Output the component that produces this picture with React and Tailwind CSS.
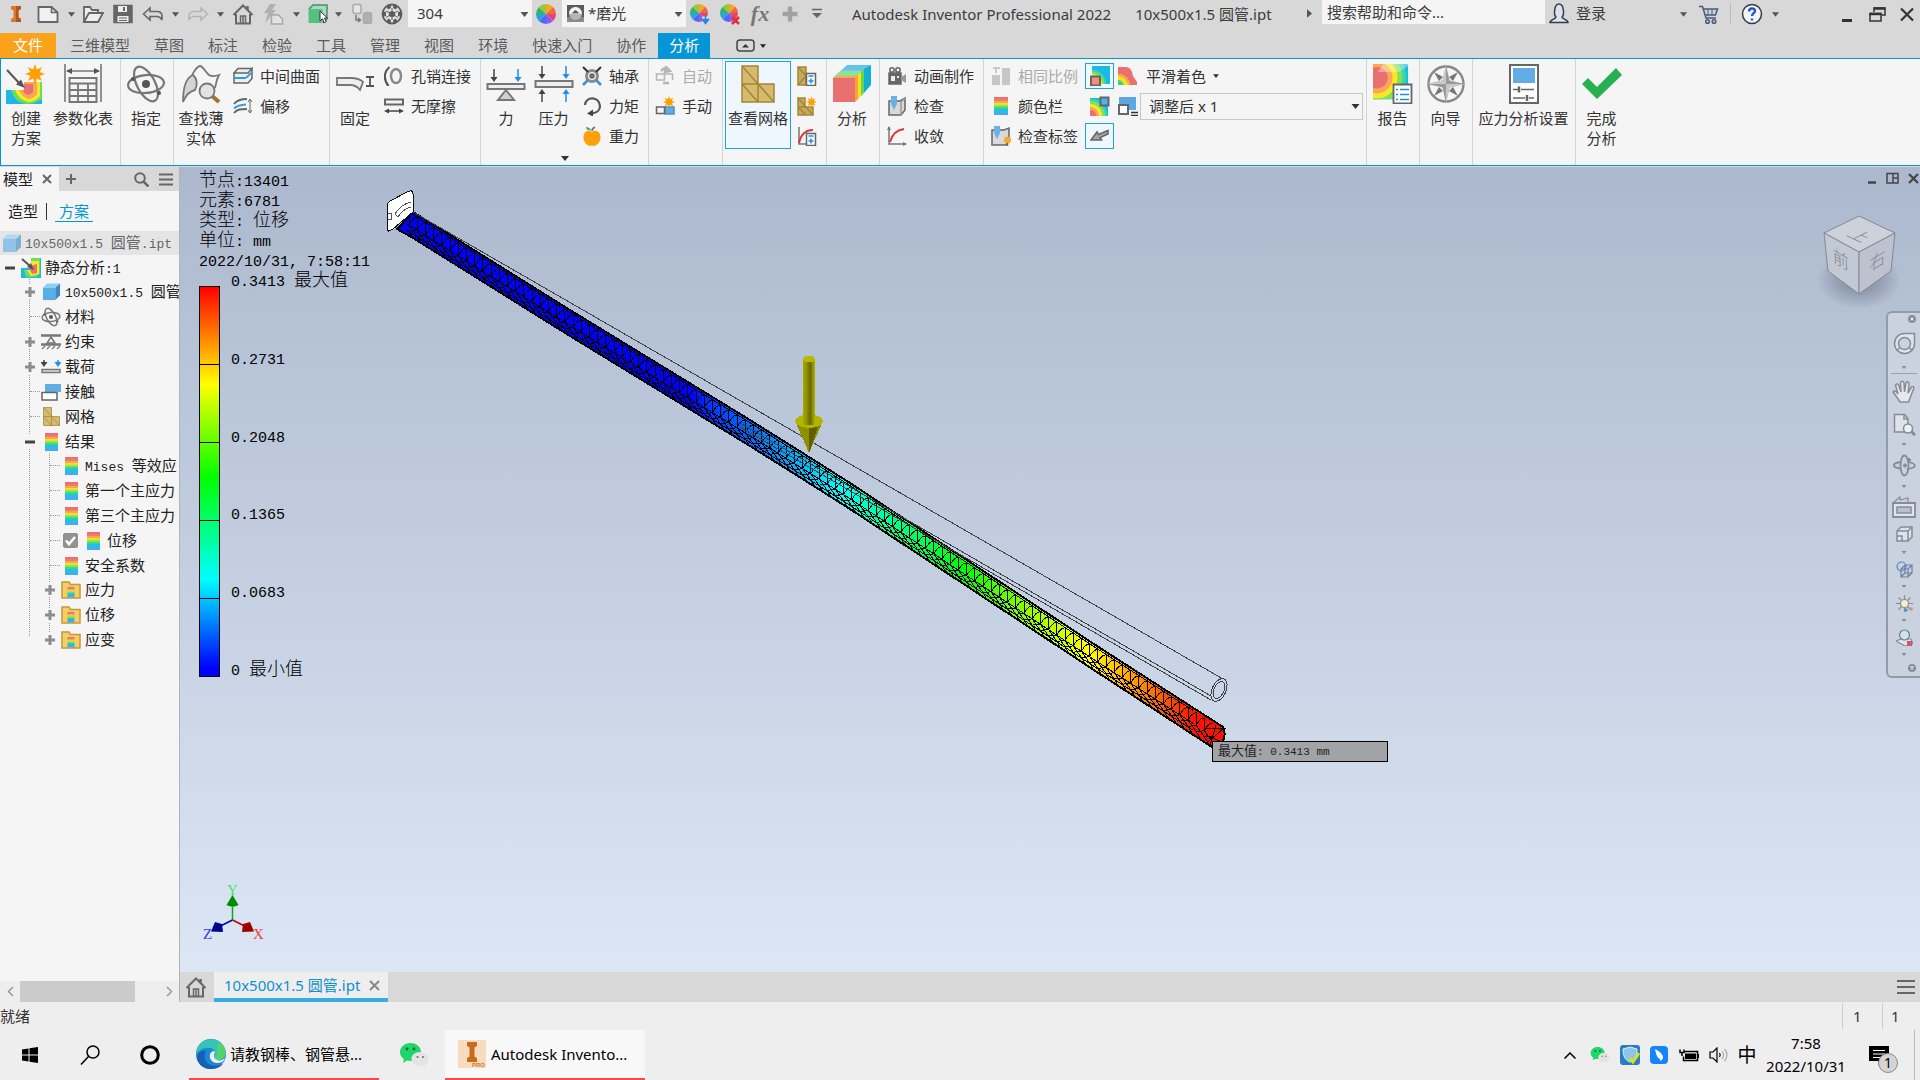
import React from "react";

const UI = "font-['Noto_Sans','Noto_Sans_CJK_SC',sans-serif]";

/* ---------- helpers ---------- */

function Svg({ w = 22, h = w, vw = w, vh = h, children, ...rest }) {
  return (
    <svg
      width={w}
      height={h}
      viewBox={`0 0 ${vw} ${vh}`}
      fill="none"
      stroke="#666"
      strokeWidth="1.5"
      className="shrink-0"
      aria-hidden="true"
      {...rest}
    >
      {children}
    </svg>
  );
}

/* Latin runs are set in a narrower monospaced face than the Chinese runs. */
function Mixed({ text, latin = "text-[13px]" }) {
  return text.split(/([\x20-\x7e]+)/).map((part, i) =>
    /^[\x20-\x7e]+$/.test(part) ? (
      <span key={i} className={`font-['Liberation_Mono',monospace] whitespace-pre ${latin}`}>
        {part}
      </span>
    ) : (
      part
    )
  );
}

const Caret = ({ color = "#555", w = 8, h = 5 }) => (
  <svg width={w} height={h} viewBox="0 0 8 5" aria-hidden="true" className="shrink-0">
    <path d="M0 0h8L4 5z" fill={color} />
  </svg>
);

const CaretBtn = ({ className = "", label = "更多" }) => (
  <button type="button" aria-label={label} className={`flex h-7 w-3 items-center justify-center ${className}`}>
    <Caret w={7} />
  </button>
);

const QBtn = ({ className = "", label, children }) => (
  <button type="button" aria-label={label} className={`flex h-7 w-[22px] shrink-0 items-center justify-center ${className}`}>
    {children}
  </button>
);

/* ---------- shared glyphs ---------- */

const STRIPES = ["#ea6f6f", "#ee7b6c", "#f8a45a", "#f7e21a", "#8be35a", "#35d98a", "#1fc3dc", "#35b4f5", "#46aaf2"];

const Bar = ({ x = 0, y = 0, w = 12, h = 18 }) => (
  <g stroke="none">
    {STRIPES.map((c, i) => (
      <rect key={i} x={x} y={y + (i * h) / 9} width={w} height={h / 9 + 0.3} fill={c} />
    ))}
  </g>
);

const Wheel = ({ cx = 11, cy = 11, r = 10 }) => {
  const colors = ["#f5a623", "#ef6a3a", "#e0457b", "#8a5cf0", "#4b6bf5", "#27a5d8", "#35b56a", "#9bc53d"];
  return (
    <g stroke="none">
      {colors.map((c, i) => {
        const a = ((i * 45 - 90) * Math.PI) / 180;
        const b = ((i * 45 - 45) * Math.PI) / 180;
        return (
          <path
            key={i}
            fill={c}
            d={`M${cx} ${cy}L${cx + r * Math.cos(a)} ${cy + r * Math.sin(a)}A${r} ${r} 0 0 1 ${cx + r * Math.cos(b)} ${cy + r * Math.sin(b)}z`}
          />
        );
      })}
    </g>
  );
};

const HomeIcon = () => (
  <Svg w={22}>
    <path d="M1.500 12L11 2.500l9.500 9.500M4 11v9.500h14V11" strokeWidth="2" />
    <path d="M15.500 3v4" strokeWidth="2.500" />
    <path d="M8.500 20v-7h5v7M11 13v7" />
  </Svg>
);

const Star = ({ cx, cy, r }) => {
  let d = "";
  for (let i = 0; i < 16; i++) {
    const a = (i * Math.PI) / 8 - Math.PI / 2;
    const k = i % 2 ? r * 0.5 : r;
    d += `${i ? "L" : "M"}${cx + k * Math.cos(a)} ${cy + k * Math.sin(a)}`;
  }
  return <path d={d + "z"} fill="#ff9f00" stroke="none" />;
};

const Mesh = ({ w = 34, h = 38 }) => (
  <Svg w={w} h={h} vw={34} vh={38} stroke="#a3863b">
    <path d="M1 1h16v18h16v18H1z" fill="#d7bb6c" />
    <path d="M1 19h16v18M1 1l16 18M1 19l16 18M17 19l16 18" />
  </Svg>
);

const Cube = ({ size = 20, faded }) => (
  <Svg w={size} vw={20} vh={20} stroke="none" opacity={faded ? 0.6 : 1}>
    <path d="M1 6L5 1.500h14L14 6z" fill="#8fd0fa" />
    <path d="M1 6h13v13H1z" fill="#58aee6" />
    <path d="M14 6l5-4.500V14l-5 5z" fill="#3d89bf" />
  </Svg>
);

const Atom = ({ size = 40 }) => (
  <Svg w={size} vw={40} vh={40} stroke="#777" strokeWidth={size < 30 ? 3 : 2.2}>
    <ellipse cx="20" cy="20" rx="18" ry="9" transform="rotate(-5 20 20)" />
    <ellipse cx="20" cy="20" rx="9" ry="19" transform="rotate(-28 20 20)" />
    <circle cx="20" cy="20" r="4" fill="#555" stroke="none" />
    <circle cx="7" cy="15" r="2" fill="#555" stroke="none" />
    <circle cx="33" cy="29" r="2" fill="#555" stroke="none" />
  </Svg>
);

const Down = ({ x, y1, y2, c = "#444" }) => {
  const s = y2 > y1 ? 1 : -1;
  return (
    <g>
      <path d={`M${x} ${y1}V${y2 - 4 * s}`} stroke={c} strokeWidth="1.500" />
      <path d={`M${x - 3.5} ${y2 - 5 * s}h7L${x} ${y2}z`} fill={c} stroke="none" />
    </g>
  );
};

const WeChat = ({ size }) => (
  <Svg w={size} vw={30} vh={26} stroke="none">
    <path d="M11.500 1C5.500 1 1 5 1 10c0 3 1.500 5.500 4 7l-1 4 4-2.500c1 .3 2.300.5 3.500.5C17.500 19 22 15 22 10S17.500 1 11.500 1z" fill="#1fd668" />
    <circle cx="8" cy="7" r="1.400" fill="#0a6b33" />
    <circle cx="15" cy="7" r="1.400" fill="#0a6b33" />
    <path d="M21 10c-5 0-8.500 3-8.500 7s3.500 7 8.500 7c1 0 2-.1 2.800-.4L27 25.500l-.8-3.200C28.300 21 29.500 19 29.500 17c0-4-3.500-7-8.500-7z" fill="#e4e4e4" />
    <circle cx="18.500" cy="15" r="1.100" fill="#777" />
    <circle cx="24" cy="15" r="1.100" fill="#777" />
  </Svg>
);

/* ---------- title bar ---------- */

function Combo({ label, value, width, className = "", textPad }) {
  return (
    <span className={`relative block h-[27px] shrink-0 ${width} ${className}`}>
      <select aria-label={label} defaultValue={value} className={`h-full w-full appearance-none bg-[#f5f5f5] text-[15px] text-[#3c3c3c] outline-none ${textPad}`}>
        <option>{value}</option>
      </select>
      <span className="pointer-events-none absolute top-3 right-[3px]">
        <Caret w={9} />
      </span>
    </span>
  );
}

function TitleBar() {
  return (
    <header className="flex h-[33px] shrink-0 items-start pl-[5px] text-[15px] text-[#3c3c3c]">
      <QBtn label="Inventor">
        <Svg w={12} h={16} vh={18} preserveAspectRatio="none" stroke="none">
          <path d="M1 0h10v3.500L8.500 5v8l2.500 1.500V18H1v-3.500L3.500 13V5L1 3.500z" fill="#d9772b" />
          <path d="M6 0h5v3.500L8.500 5v8l2.500 1.500V18H6z" fill="#b4561a" />
        </Svg>
      </QBtn>
      <QBtn label="新建" className="ml-2.5">
        <Svg><path d="M1.500 4h13l6 5.500V19h-19z" fill="#f0f0f0" strokeWidth="1.800" /><path d="M14.500 4v5.500h6" /></Svg>
      </QBtn>
      <CaretBtn className="ml-1.5" />
      <QBtn label="打开" className="ml-[5px]">
        <Svg><path d="M2 19V4h6l2 3h6v3M2 19L7 10h14l-5 9z" fill="#eee" strokeWidth="1.800" /></Svg>
      </QBtn>
      <QBtn label="保存" className="ml-2">
        <Svg><path d="M2 2.500h18v17H2z" fill="#666" /><path d="M6 3h9v6H6zM5.500 13h11v6h-11z" fill="#eee" stroke="none" /><path d="M12 4v4" strokeWidth="2" /><path d="M7 15h8M7 17.500h8" strokeWidth="1" /></Svg>
      </QBtn>
      <QBtn label="撤销" className="ml-2">
        <Svg><path d="M1.500 11L8 5v3.500h7c3.500 0 5 2 5 4.500v4c-1-2-2.500-3.500-5-3.500H8V17z" strokeWidth="1.600" /></Svg>
      </QBtn>
      <CaretBtn className="ml-[5px]" />
      <QBtn label="重做" className="ml-1.5">
        <Svg stroke="#b5b5b5"><path d="M20.500 11L14 5v3.500H7c-3.500 0-5 2-5 4.500v4c1-2 2.500-3.500 5-3.500h7V17z" strokeWidth="1.600" /></Svg>
      </QBtn>
      <CaretBtn className="ml-[5px]" />
      <QBtn label="主页" className="ml-1.5"><HomeIcon /></QBtn>
      <QBtn label="更新" className="ml-2">
        <Svg stroke="#a8a8a8"><path d="M8 1h6L10 7h4L3 20 6 10H2z" fill="#b0b0b0" stroke="none" /><path d="M9.500 12h7l4 4v5h-11z" fill="#e3e3e3" /></Svg>
      </QBtn>
      <CaretBtn className="ml-1.5" />
      <QBtn label="选择" className="ml-[5px]">
        <Svg><path d="M2 6L6 2h14v14l-4 4" fill="#a5dcbb" stroke="#4d8a66" /><path d="M1.500 6h14v14h-14z" fill="#55c181" stroke="none" /><path d="M13 8v10l2.500-2.300 1.700 4 2-1-1.700-3.700h3z" fill="#fff" stroke="#333" strokeWidth="1" /></Svg>
      </QBtn>
      <CaretBtn className="ml-[3px]" />
      <QBtn label="链接" className="ml-[7px]">
        <Svg stroke="#aaa"><rect x="2" y="1.500" width="8" height="9" rx="2" fill="#e5e5e5" /><path d="M12.500 11c0-2 8-2 8 0v8c0 2-8 2-8 0z" fill="#b0b0b0" /><path d="M5 12v5h4M7 15l2.500 2L7 19" stroke="#777" /></Svg>
      </QBtn>
      <QBtn label="材料" className="ml-2">
        <Svg>
          <circle cx="11" cy="11" r="9.500" fill="#e2e2e2" stroke="#5c5c5c" strokeWidth="1.800" />
          <g fill="#5c5c5c" stroke="none">
            <path d="M11 7.500l3.200 2v3.200L11 14.700l-3.200-2V9.500z" />
            <path d="M5.500 3.500l4-2 .5 3.500-3 1.500zM16.500 3.500l-4-2L12 5l3 1.500zM5.500 18.500l4 2L10 17l-3-1.500zM16.500 18.500l-4 2L12 17l3-1.500zM1.500 8l3.500 1v4l-3.500 1zM20.500 8L17 9v4l3.500 1z" />
          </g>
          <path d="M8 9.500L5 8M14 9.500L17 8M8 12.700L5 14.500M14 12.700l3 1.800M11 7.500V5M11 14.700V17" stroke="#5c5c5c" strokeWidth="1" />
        </Svg>
      </QBtn>
      <Combo label="材料" value="304" width="w-[124px]" className="ml-[5px]" textPad="pl-[9px]" />
      <QBtn label="外观颜色" className="ml-[3px]"><Svg><Wheel /></Svg></QBtn>
      <span className="relative ml-[5px]">
        <Combo label="外观" value="*磨光" width="w-[124px]" textPad="pl-[26px]" />
        <span className="pointer-events-none absolute top-[5px] left-[5px]">
          <Svg w={17} stroke="none"><path d="M0 0h17v17H0z" fill="#5b5b5b" /><path d="M0 12h17v5H0z" fill="#8a8a8a" /><circle cx="8.500" cy="8.500" r="6.500" fill="#b5b5b5" /><path d="M2 8.500a6.500 6.500 0 0 1 13 0c-2 1-3-1-6.500-1S4 9.500 2 8.500z" fill="#f3f3f3" /><path d="M5 8l3.500-3L12 8z" fill="#555" /></Svg>
        </span>
      </span>
      <QBtn label="调整外观" className="ml-[3px]"><Svg><Wheel cx={10} cy={10} r={9} /><path d="M13 16h8" stroke="#dadada" strokeWidth="5" /><path d="M16.500 12.500v7M13.500 16.500l3 4 3-4z" stroke="#2b82d9" fill="#2b82d9" /></Svg></QBtn>
      <QBtn label="清除外观" className="ml-2"><Svg><Wheel cx={10} cy={10} r={9} /><path d="M13 14l7 7M20 14l-7 7" stroke="#e03131" strokeWidth="2.500" /></Svg></QBtn>
      <QBtn label="参数" className="ml-2"><span className="font-['Liberation_Serif',serif] text-[22px] leading-none font-bold text-[#777] italic">fx</span></QBtn>
      <QBtn label="添加" className="ml-2"><Svg stroke="#a2a2a2" strokeWidth="4.500"><path d="M11 3.500v15M3.500 11h15" /></Svg></QBtn>
      <QBtn label="自定义快速访问工具栏" className="ml-[5px]"><Svg w={12} h={12}><path d="M1 1.500h10" /><path d="M1 5h10L6 10z" fill="#666" stroke="none" /></Svg></QBtn>

      <h1 className="ml-6 flex min-w-0 gap-6 text-[15px] leading-7 whitespace-nowrap">
        <span>Autodesk Inventor Professional 2022</span>
        <span>10x500x1.5 圆管.ipt</span>
      </h1>

      <div className="ml-auto flex shrink-0 items-start pr-0.5">
        <button type="button" aria-label="展开搜索" className="mt-[7px] mr-[7px] h-3 w-2"><Svg w={5} h={9} vw={6} vh={10} stroke="none"><path d="M0 0l6 5-6 5z" fill="#555" /></Svg></button>
        <input aria-label="搜索帮助和命令" placeholder="搜索帮助和命令..." className="h-6 w-[223px] bg-[#f5f5f5] px-[5px] text-[15px] outline-none placeholder:text-[#3c3c3c]" />
        <button type="button" className="ml-[3px] flex h-[26px] items-center gap-1.5">
          <Svg stroke="#333b4d"><path d="M2 20.500c0-3 6-3.500 6-5.500C5.500 13 6 2 11 2s5.500 11 3 13c0 2 6 2.500 6 5.500z" fill="#dfe2e8" /></Svg>
          登录
        </button>
        <CaretBtn className="ml-[71px]" />
        <QBtn label="应用商店" className="ml-[9px]"><Svg stroke="#4d5878"><path d="M1 3.500h3.500L8 15h10M5.500 6h14l-2 6H7.500" fill="#ccd3e3" /><path d="M10 6v6M14 6v6" strokeWidth="1" /><circle cx="9.500" cy="18.500" r="1.800" /><circle cx="16" cy="18.500" r="1.800" /></Svg></QBtn>
        <span className="mx-[10px] mt-[3px] h-5 w-px bg-[#bbb]" />
        <QBtn label="帮助"><Svg stroke="#333a4a"><circle cx="11" cy="11" r="9.500" fill="#f2f4f8" /><path d="M8 8.500c0-4 6-4 6-.5 0 2-3 2.500-3 5M11 15.500v2" stroke="#2a55c4" strokeWidth="2.400" /></Svg></QBtn>
        <CaretBtn className="ml-1.5" />
        <QBtn label="最小化" className="ml-[55px]"><Svg stroke="#333"><path d="M6 17.500h10" strokeWidth="3" /></Svg></QBtn>
        <QBtn label="还原" className="ml-2"><Svg stroke="#333"><path d="M8 9V5h11v7h-3" /><path d="M7.500 5.500h12" strokeWidth="2.500" /><path d="M4 10.500h11V18H4z" /><path d="M3.500 11h12" strokeWidth="2.500" /></Svg></QBtn>
        <QBtn label="关闭" className="ml-2"><Svg stroke="#333"><path d="M5 5.500l12 12M17 5.500l-12 12" strokeWidth="2.200" /></Svg></QBtn>
      </div>
    </header>
  );
}

/* ---------- ribbon ---------- */

const TABS = ["三维模型", "草图", "标注", "检验", "工具", "管理", "视图", "环境", "快速入门", "协作"];

function Tabs() {
  return (
    <nav className="flex h-[25px] shrink-0 items-center text-[15px] leading-[25px] text-[#5a5a5a]">
      <button type="button" className="mr-0.5 h-full bg-[#faa21b] px-[13px] text-white">文件</button>
      {TABS.map((t) => (
        <button type="button" key={t} className="h-full px-3">{t}</button>
      ))}
      <button type="button" className="h-full bg-[#0696d7] px-[11px] text-white">分析</button>
      <button type="button" aria-label="最小化功能区" className="ml-[26px] flex items-center gap-[5px]">
        <Svg w={19} h={13} stroke="#444"><rect x="1" y="1" width="17" height="11" rx="3" /><path d="M6 8.500h7L9.500 5z" fill="#333" stroke="none" /></Svg>
        <Caret color="#222" w={6} h={4} />
      </button>
    </nav>
  );
}

function Big({ icon, lines, w, active }) {
  return (
    <button
      type="button"
      className={`mt-0.5 flex h-[88px] shrink-0 flex-col items-center border pt-0.5 text-[15px] leading-5 whitespace-nowrap ${w} ${active ? "border-[#1fa3e0] bg-[#eef7fd]" : "border-transparent"}`}
    >
      <span className="mb-1 flex h-10 w-10 items-center justify-center">{icon}</span>
      {lines.map((l) => (
        <span key={l}>{l}</span>
      ))}
    </button>
  );
}

function Small({ icon, label, name = label, disabled, gap = "gap-[7px]" }) {
  return (
    <button type="button" aria-label={name} disabled={disabled} className={`flex h-[30px] items-center text-[15px] whitespace-nowrap ${gap} ${disabled ? "text-[#ababab]" : ""}`}>
      <span className="flex w-5 justify-center">{icon}</span>
      {label}
    </button>
  );
}

const Panel = ({ w, className = "", children }) => (
  <section className={`flex h-full shrink-0 items-start border-r border-[#d4d4d4] ${w} ${className}`}>{children}</section>
);

const Col = ({ className = "", children }) => <div className={`flex flex-col pt-0.5 ${className}`}>{children}</div>;

const Contour = ({ x = 0, y = 0, s = 1, cx = 4, cy = 14, k = 1, id }) => (
  <g transform={`translate(${x} ${y}) scale(${s})`} stroke="none">
    <clipPath id={id}><path d="M0 0h36v36H0z" /></clipPath>
    <g clipPath={`url(#${id})`}>
      <path d="M0 0h36v36H0z" fill="#1bb9ea" />
      <circle cx={cx} cy={cy} r={30 * k} fill="#35d9a8" />
      <circle cx={cx} cy={cy} r={26 * k} fill="#84e05a" />
      <circle cx={cx} cy={cy} r={21 * k} fill="#f7ea22" />
      <circle cx={cx} cy={cy} r={16 * k} fill="#f9a858" />
      <circle cx={cx} cy={cy} r={11 * k} fill="#ea6f6f" />
    </g>
  </g>
);

function Ribbon() {
  return (
    <div className="mb-px flex h-[108px] shrink-0 overflow-hidden border border-r-0 border-[#0696d7] bg-[#f5f5f5] text-[#333]">
      <Panel w="w-[120px]">
        <Big
          w="w-[50px]"
          lines={["创建", "方案"]}
          icon={
            <Svg w={40} stroke="none">
              <path d="M0 26h18V18h18v22H0z" fill="#22b5e8" />
              <path d="M5 26h13V18h18v17q-8 5-16 5-12-2-15-14z" fill="#6adf5a" />
              <path d="M9 26h9V18h16v14q-5 6-12 6-10-3-13-12z" fill="#f7ea22" />
              <path d="M13 26h5V18h13v12q-3 5-9 5-7-3-9-9z" fill="#f9a858" />
              <path d="M17 26h1v-6h9v8q-2 3-5 3-4-1-5-5z" fill="#ea6f6f" />
              <Star cx={29} cy={10} r={10} />
              <path d="M1 6l13 14" stroke="#555" strokeWidth="2" />
              <path d="M19 24l-9-3.500 5-5z" fill="#555" />
            </Svg>
          }
        />
        <Big
          w="w-16"
          lines={["参数化表"]}
          icon={
            <Svg w={40} stroke="#777">
              <path d="M2 0v38M38 0v38M4 7h32" strokeWidth="1.600" />
              <path d="M3 7l6-3v6zM37 7l-6-3v6z" fill="#555" stroke="none" />
              <path d="M6.500 14h27v24h-27z" strokeWidth="2" />
              <path d="M6 19.500h28M6 26h28M6 32h28M15 19v19M25 19v19" strokeWidth="1.800" />
            </Svg>
          }
        />
      </Panel>
      <Panel w="w-[53px]"><Big w="w-12 ml-px" lines={["指定"]} icon={<Atom />} /></Panel>
      <Panel w="w-[156px]">
        <Big
          w="w-[54px]"
          lines={["查找薄", "实体"]}
          icon={
            <Svg w={40} stroke="#777" strokeWidth="1.800">
              <path d="M2 38C2 26 4 14 12 11c4 3 5 10 2 15C9 27 5 31 2 38z" fill="#d4d4d4" />
              <path d="M11 11C14 6 16 2 19 2s5 6 9 9c3 2 7 1 10 0-3 5-3 10-4 13" />
              <path d="M30 31l8 7" stroke="#a3702e" strokeWidth="4" />
              <circle cx="26" cy="27" r="7.500" fill="#dfe4e8" />
            </Svg>
          }
        />
        <Col className="ml-[5px]">
          <Small
            label="中间曲面"
            icon={<Svg w={20} h={18}><path d="M1 6l4-4.500h14L15 6zM1 6h14l4-4.500v10L15 16H1z" fill="#eee" /><path d="M1 11h11c3 0 4-5 7-5" stroke="#2f9be6" strokeWidth="2" /></Svg>}
          />
          <Small
            label="偏移"
            icon={<Svg w={20} h={18}><path d="M1 7c3-4 7-5 13-5M1 16c3-4 7-4 13-4" strokeWidth="2" /><path d="M1 11.500c4-4 8-3.500 12-4" stroke="#2f9be6" strokeWidth="2" /><path d="M17 3v12M15 5l2-3 2 3M15 13l2 3 2-3" strokeWidth="1" /></Svg>}
          />
        </Col>
      </Panel>
      <Panel w="w-[151px]">
        <Big
          w="w-[50px]"
          lines={["固定"]}
          icon={
            <Svg w={40} stroke="#777" strokeWidth="1.800">
              <path d="M2 14h14c5 0 9 1 12 4l-3 8c-3-4-6-5-10-5H2z" fill="#eee" />
              <path d="M31 13h8M31 22h8M35 13v9" stroke="#555" />
            </Svg>
          }
        />
        <Col className="ml-1">
          <Small label="孔销连接" icon={<Svg w={20}><path d="M5.500 1C-.5 6-.5 14 4.500 20" strokeWidth="2.200" stroke="#555" /><ellipse cx="12" cy="10" rx="5" ry="7" strokeWidth="2.400" stroke="#888" /></Svg>} />
          <Small label="无摩擦" icon={<Svg w={20} h={16}><path d="M1 1.500h18v5H1z" strokeWidth="2" /><path d="M2 13h16" strokeWidth="1.500" stroke="#444" /><path d="M0 13l5-2.500v5zM20 13l-5-2.500v5z" fill="#444" stroke="none" /></Svg>} />
        </Col>
      </Panel>
      <Panel w="w-[168px]" className="relative">
        <Big
          w="w-12 ml-px"
          lines={["力"]}
          icon={<Svg w={40} stroke="#777"><Down x={8} y1={5} y2={18} /><Down x={32} y1={5} y2={18} c="#1c8fe8" /><path d="M1.500 20h37v5h-37z" fill="#eee" strokeWidth="2" /><path d="M20 26l8 10H12z" fill="#d0d0d0" strokeWidth="2" /></Svg>}
        />
        <Big
          w="w-[47px]"
          lines={["压力"]}
          icon={<Svg w={40} stroke="#777"><Down x={8} y1={2} y2={15} /><Down x={32} y1={2} y2={15} c="#1c8fe8" /><path d="M1.500 17h37v6h-37z" fill="#eee" strokeWidth="2" /><Down x={8} y1={38} y2={25} /><Down x={32} y1={38} y2={25} c="#1c8fe8" /></Svg>}
        />
        <Col className="ml-[5px]">
          <Small
            label="轴承"
            icon={<Svg w={20}><circle cx="10" cy="10" r="5.500" strokeWidth="3" stroke="#8a8a8a" /><circle cx="10" cy="10" r="2" fill="#777" /><path d="M1 1l5 5M19 1l-5 5" stroke="#333" strokeWidth="2" /><path d="M1 19l5-5M19 19l-5-5" stroke="#3a8fd6" strokeWidth="2.500" /></Svg>}
          />
          <Small label="力矩" icon={<Svg w={20}><path d="M3 9c1-9 14-9 15 1 0 4-3 7-8 7.500" strokeWidth="2.200" stroke="#555" /><path d="M5 17.500l6-4v7z" fill="#444" stroke="none" /></Svg>} />
          <Small label="重力" icon={<Svg w={20} stroke="none"><path d="M10 6c4-3 9 0 8.500 6C18 17 14 21 10 19.500 6 21 2 17 1.500 12 1 6 6 3 10 6z" fill="#ff9f0a" /><path d="M10 5c0-2 1-3 3-4" stroke="#777" strokeWidth="1.800" /><path d="M9 4C8 2 6 1 4 1c0 2 2 4 5 3z" fill="#2fb45a" /></Svg>} />
        </Col>
        <button type="button" aria-label="展开面板" className="absolute bottom-1 left-[79px]"><Caret color="#333" w={10} h={5} /></button>
      </Panel>
      <Panel w="w-[74px]">
        <Col className="ml-[6px]">
          <Small disabled label="自动" icon={<Svg w={20} stroke="#b5b5b5"><path d="M1.500 8h8v6h-8zM9.500 8h8v6" /><path d="M6 5c3-4 6-4 8 0M11 1l4 4-5 1zM8 17h6" strokeWidth="2.500" /></Svg>} />
          <Small label="手动" icon={<Svg w={20}><path d="M10 11h9v7h-9z" fill="#5aaee8" stroke="#4d90c0" /><path d="M1.500 11h8v6.500h-8z" fill="#f5f5f5" /><Star cx={14} cy={6} r={6} /></Svg>} />
        </Col>
      </Panel>
      <Panel w="w-[104px]">
        <Big active w="ml-0.5 w-[66px]" lines={["查看网格"]} icon={<Mesh />} />
        <Col className="ml-[6px]">
          <Small name="网格设置" icon={<Svg w={20}><path d="M1 1h8v18H1z" fill="#c8aa5a" stroke="#a3863b" /><path d="M1 1l8 9-8 9" stroke="#a3863b" /><path d="M9.500 7.500h9v12h-9z" fill="#fff" /><path d="M11.500 10h5" stroke="#1c8fe8" /><path d="M14 12.500v5M11.500 15h5" stroke="#1c8fe8" /></Svg>} />
          <Small name="局部网格控制" icon={<Svg w={20}><path d="M1 2h7v9h8v8H1z" fill="#c8aa5a" stroke="#a3863b" /><path d="M1 2l15 17M1 11l8 8M8 11H1" stroke="#a3863b" /><Star cx={14.5} cy={6} r={5.5} /></Svg>} />
          <Small name="收敛设置" icon={<Svg w={20}><path d="M2 1v17h7" stroke="#777" /><path d="M2 17C4 8 9 4 16 4" stroke="#d9353b" strokeWidth="2" /><path d="M9.500 7.500h9v12h-9z" fill="#fff" /><path d="M11.500 10h5M14 12.500v5M11.500 15h5" stroke="#1c8fe8" /></Svg>} />
        </Col>
      </Panel>
      <Panel w="w-[53px]">
        <Big
          w="w-12 ml-px"
          lines={["分析"]}
          icon={
            <Svg w={40} stroke="none">
              <path d="M1 14L15 1h24L24 14z" fill="#62c3ee" />
              <path d="M3 12L9 6.500h23L26 12z" fill="#8fe09a" />
              <path d="M1 14l2-2h23l-2 2z" fill="#f9a858" />
              <path d="M1 14h22v24H1z" fill="#ea6f6f" />
              <path d="M23 14l4-4v24l-4 4z" fill="#f9a23a" />
              <path d="M26 11l4-4v24l-4 4z" fill="#f7e21a" />
              <path d="M29 8l3-3v24l-3 3z" fill="#5fd85a" />
              <path d="M32 5l7-4v20l-7 8z" fill="#12b0cf" />
            </Svg>
          }
        />
      </Panel>
      <Panel w="w-[104px]">
        <Col className="ml-[7px]">
          <Small label="动画制作" icon={<Svg w={20} stroke="#666"><path d="M2 7h12v11H2z" fill="#666" /><path d="M14 11l5-3v9l-5-3z" fill="#999" stroke="none" /><circle cx="5" cy="4" r="2.200" /><circle cx="11" cy="4" r="2.200" /><path d="M4 10h4v5H4zM10 10h2v2h-2z" fill="#eee" stroke="none" /></Svg>} />
          <Small label="检查" icon={<Svg w={20}><path d="M2 5h11l5-3v12l-4 5H2z" fill="#d9d9d9" /><path d="M14 19V6l4-4" stroke="#999" /><path d="M4 0h6v8L7 14 4 8z" fill="#69b1e6" stroke="none" /></Svg>} />
          <Small label="收敛" icon={<Svg w={20}><path d="M2 1v17h17" stroke="#777" /><path d="M0 4l2-4 2 4zM16 16l4 2-4 2z" fill="#777" stroke="none" /><path d="M3 16C5 8 10 4 17 3" stroke="#d9353b" strokeWidth="2" /></Svg>} />
        </Col>
      </Panel>
      <Panel w="min-w-[383px]">
        <Col className="ml-[7px]">
          <Small disabled label="相同比例" icon={<Svg w={20} stroke="none"><path d="M1 9h8v10H1zM11 2h8v17h-8z" fill="#c6c6c6" /><path d="M5 7V2M2 2h7" stroke="#bbb" /></Svg>} />
          <Small label="颜色栏" icon={<Svg w={14} h={18}><Bar w={14} h={18} /></Svg>} />
          <Small label="检查标签" icon={<Svg w={20}><path d="M1 4h12l5-2v13l-3 4H1z" fill="#d9d9d9" /><path d="M3 0h6v7L6 13 3 7z" fill="#69b1e6" stroke="none" /><circle cx="16.500" cy="14" r="3.500" fill="#f7a928" stroke="none" /><path d="M16.500 17v3" /></Svg>} />
        </Col>
        <Col className="ml-[7px] items-center">
          <span className="flex h-[30px] items-center">
            <button type="button" aria-label="云图" className="flex h-[26px] w-[29px] items-center justify-center border border-[#1fa3e0] bg-[#eef7fd]">
              <Svg w={20}><Contour id="ca" x={2} y={0} s={0.5} cx={0} cy={36} k={0.95} /><path d="M1 10.500h9v9H1z" fill="#ef8f7a" stroke="#666" strokeWidth="2" /></Svg>
            </button>
          </span>
          <Small name="最大值" icon={<Svg w={20}><Contour id="cb" x={0} y={2} s={0.5} cx={0} cy={36} k={1.15} /><path d="M10.500 1.500h8v8h-8z" fill="#55aef0" stroke="#666" strokeWidth="2" /></Svg>} />
          <span className="flex h-[30px] items-center">
            <button type="button" aria-label="边界条件" className="flex h-[26px] w-[29px] items-center justify-center border border-[#1fa3e0] bg-[#eef7fd]">
              <Svg w={20} h={14} stroke="#666"><path d="M1 11L7 3l1.500 2.500L18 1.500V5L10 8.500l1.500 2.500z" fill="#a5a5a5" strokeWidth="1.600" /></Svg>
            </button>
          </span>
        </Col>
        <Col className="ml-1">
          <button type="button" className="flex h-[30px] items-center text-[15px]">
            <span className="mr-2"><Svg w={20} stroke="none"><path d="M0 1h7c6 0 7 4 8 9l4 6v3h-7C11 13 7 8 0 8z" fill="#ea6f6f" /><path d="M0 8c7 0 11 5 12 11H9C8 14 5 11 0 11z" fill="#f9a43a" /><path d="M0 10c5 0 9 4 10 9H5c0-3-2-4-5-4z" fill="#f7e21a" /><path d="M0 14c3 0 5 2 6 5H0z" fill="#3ccf8e" /></Svg></span>
            平滑着色
            <span className="ml-[7px]"><Caret color="#333" w={6} h={4} /></span>
          </button>
          <div className="flex h-[30px] items-center">
            <Svg w={20} h={20}><path d="M1 1h17v13H1z" fill="#5aa9e6" stroke="none" /><path d="M1 9h9v9H1z" fill="#fff" strokeWidth="2" /><path d="M13 16.500h7M13 19.500h7" stroke="#333" /></Svg>
            <span className="relative ml-0.5">
              <select aria-label="位移比例" defaultValue="调整后 x 1" className="h-[27px] w-[223px] appearance-none border border-[#c8c8c8] bg-[#f5f5f5] pl-2 text-[15px] outline-none">
                <option>调整后 x 1</option>
              </select>
              <span className="pointer-events-none absolute top-[11px] right-[3px] flex"><Caret color="#333" w={9} /></span>
            </span>
          </div>
        </Col>
      </Panel>
      <Panel w="w-[53px]">
        <Big
          w="w-[51px]"
          lines={["报告"]}
          icon={<Svg w={40}><Contour id="cc" s={0.98} /><path d="M5 8L10 0h28L26 8z" fill="#fff" opacity=".35" stroke="none" /><path d="M20.500 20.500h18v19h-18z" fill="#fff" strokeWidth="1.800" /><path d="M27 25.500h9M27 30.500h9M27 35.500h9M23 25.500h2M23 30.500h2M23 35.500h2" stroke="#1c8fe8" /></Svg>}
        />
      </Panel>
      <Panel w="w-[53px]">
        <Big
          w="w-[51px]"
          lines={["向导"]}
          icon={<Svg w={40} stroke="#888"><circle cx="20" cy="20" r="17.500" strokeWidth="2.400" /><path d="M20 1l3.500 15.500L39 20l-15.500 3.500L20 39l-3.500-15.500L1 20l15.500-3.500z" fill="#999" stroke="none" /><path d="M20 1v19H1l15.500-3.500zM20 39V20h19l-15.500 3.500z" fill="#c9c9c9" stroke="none" /><path d="M8 8l9 5-4 4zM32 8l-9 5 4 4zM8 32l9-5-4-4zM32 32l-9-5 4-4z" fill="#777" stroke="none" /></Svg>}
        />
      </Panel>
      <Panel w="w-[103px]">
        <Big
          w="w-[101px]"
          lines={["应力分析设置"]}
          icon={<Svg w={30} h={40}><path d="M1 1h28v38H1z" fill="#fff" strokeWidth="2" /><path d="M4 4h22v15H4z" fill="#62ade4" stroke="none" /><path d="M4 25.500h5M12 25.500h13M4 34h12M20 34h5" /><path d="M10 22.500v6M18 31v6" strokeWidth="2.500" /></Svg>}
        />
      </Panel>
      <Big w="w-[51px]" lines={["完成", "分析"]} icon={<Svg w={40} h={32} stroke="none"><path d="M0 16l6-6 9 9L34 0l6 7-25 24z" fill="#26b04f" /></Svg>} />
    </div>
  );
}

/* ---------- browser panel ---------- */

const BarIcon = () => <Svg w={13} h={18}><Bar w={13} h={18} /></Svg>;

const Folder = () => (
  <Svg w={20} h={18} stroke="#c7973b">
    <path d="M1 1h7l1.500 2.500H19V17H1z" fill="#f4cf63" />
    <Bar x={6.5} y={6} w={7} h={10} />
  </Svg>
);

function Node({ icon, label, state, checkbox, children, className = "" }) {
  return (
    <li className={className}>
      <div className="flex h-[25px] items-center whitespace-nowrap">
        <span className="relative flex w-5 shrink-0 items-center justify-center">
          {state ? (
            <button type="button" aria-label={state === "open" ? "折叠" : "展开"} className="bg-[#f5f5f5]">
              <Svg w={11} h={14} stroke={state === "open" ? "#444" : "#8c8c8c"} strokeWidth="3">
                <path d={state === "open" ? "M0 7h10" : "M0 7h10M5 2v10"} />
              </Svg>
            </button>
          ) : (
            <span className="ml-2.5 w-2.5 border-t border-dotted border-[#999]" />
          )}
        </span>
        {checkbox && (
          <span className="relative mr-1 ml-[3px] flex size-[15px]">
            <input type="checkbox" aria-label={label} defaultChecked className="peer size-full appearance-none rounded-xs border border-[#8f8f8f] bg-white checked:bg-[#929292]" />
            <span className="pointer-events-none absolute inset-0 hidden peer-checked:block">
              <Svg w={15} stroke="#fff" strokeWidth="2.500"><path d="M3 7.500l3 3.500 6-7" /></Svg>
            </span>
          </span>
        )}
        <span className="flex w-[22px] shrink-0 justify-center">{icon}</span>
        <span className="ml-[3px]"><Mixed text={label} /></span>
      </div>
      {children && (
        <ul className="relative -mt-px ml-5 before:absolute before:top-0 before:bottom-4 before:left-[9px] before:border-l before:border-dotted before:border-[#999]">
          {children}
        </ul>
      )}
    </li>
  );
}

function Browser() {
  return (
    <aside className="flex w-[180px] shrink-0 flex-col overflow-hidden border-r border-[#b4b4b4] bg-[#f5f5f5] text-[15px] text-[#222]">
      <div className="flex h-6 items-center bg-[#d8d8d8]">
        <div className="flex h-full w-[59px] items-center justify-between bg-[#f5f5f5] pr-[7px] pl-[3px]">
          <span>模型</span>
          <button type="button" aria-label="关闭面板"><Svg w={10} strokeWidth="2"><path d="M1 1l8 8M9 1L1 9" /></Svg></button>
        </div>
        <button type="button" aria-label="添加面板" className="ml-1.5"><Svg w={12} strokeWidth="2"><path d="M6 1v10M1 6h10" /></Svg></button>
        <button type="button" aria-label="搜索" className="mr-2.5 ml-auto"><Svg w={15} strokeWidth="2"><circle cx="6" cy="6" r="4.800" /><path d="M9.500 9.500l5 5" strokeWidth="2.500" /></Svg></button>
        <button type="button" aria-label="菜单" className="mr-1.5"><Svg w={14} h={13} strokeWidth="2"><path d="M0 1.500h14M0 6.500h14M0 11.500h14" /></Svg></button>
      </div>
      <div className="flex h-10 items-center pl-2">
        <button type="button" className="pr-2">造型</button>
        <span className="h-[17px] w-px bg-[#333]" />
        <button type="button" className="ml-2 border-b border-[#0696d7] px-1 leading-5 text-[#0696d7]">方案</button>
      </div>
      <div className="flex h-6 items-center bg-[#e5e5e5] pl-0.5 whitespace-nowrap text-[#666]">
        <Cube faded />
        <span className="ml-[3px]"><Mixed text="10x500x1.5 圆管.ipt" /></span>
      </div>
      <ul className="min-h-0 flex-1">
        <Node
          state="open"
          label="静态分析:1"
          icon={
            <Svg w={20} stroke="none">
              <path d="M0 10h10V0h10v20H0z" fill="#22b5e8" />
              <path d="M3 12h7V0h9v16l-4 3H5z" fill="#6adf5a" />
              <path d="M6 12h4V3h8v13l-8 2z" fill="#f7ea22" />
              <path d="M9 12V8l7-2v9l-5 1z" fill="#ea6f6f" />
              <path d="M1 1l8 7" stroke="#555" strokeWidth="2" />
              <path d="M13 12L6 9l4-4z" fill="#555" />
            </Svg>
          }
        >
          <Node state="closed" label="10x500x1.5 圆管" icon={<Cube size={19} />} />
          <Node label="材料" icon={<Atom size={20} />} />
          <Node state="closed" label="约束" icon={<Svg w={20} h={16} stroke="#777"><path d="M0 1.500h20M0 10.500h20" strokeWidth="2.500" /><path d="M10 3l4 6H6z" /><path d="M1 15l3-3M6 15l3-3M11 15l3-3M16 15l3-3" strokeWidth="1.200" /></Svg>} />
          <Node state="closed" label="载荷" icon={<Svg w={20} h={14} stroke="#777"><Down x={3} y1={0} y2={7} /><Down x={17} y1={0} y2={7} c="#1c8fe8" /><path d="M1 9.500h18v3H1z" fill="#ddd" /></Svg>} />
          <Node label="接触" icon={<Svg w={20} h={18}><path d="M4 1h16v8H4z" fill="#62ade4" stroke="none" /><path d="M1 9.500h15V17H1z" fill="#fff" /></Svg>} />
          <Node label="网格" icon={<Mesh w={17} h={19} />} />
          <Node state="open" label="结果" icon={<BarIcon />}>
            <Node label="Mises 等效应" icon={<BarIcon />} />
            <Node label="第一个主应力" icon={<BarIcon />} />
            <Node label="第三个主应力" icon={<BarIcon />} />
            <Node label="位移" icon={<BarIcon />} checkbox />
            <Node label="安全系数" icon={<BarIcon />} />
            <Node className="-mt-px" state="closed" label="应力" icon={<Folder />} />
            <Node state="closed" label="位移" icon={<Folder />} />
            <Node state="closed" label="应变" icon={<Folder />} />
          </Node>
        </Node>
      </ul>
      <div className="flex h-[21px] items-center bg-[#eee]">
        <button type="button" aria-label="向左滚动" className="flex w-5 justify-center"><Svg w={7} h={11} stroke="#999"><path d="M6 1L1.500 5.500 6 10" /></Svg></button>
        <div className="h-full w-[115px] bg-[#cbcbcb]" />
        <button type="button" aria-label="向右滚动" className="mr-[6px] ml-auto"><Svg w={7} h={11} stroke="#999"><path d="M1 1l4.500 4.500L1 10" /></Svg></button>
      </div>
    </aside>
  );
}

/* ---------- viewport ---------- */

const TOP = [[397, 202], [413, 212], [570, 310], [750, 420], [809, 457], [850, 483], [1100, 648], [1223, 727]];
const THICK = 26;

function topY(x) {
  for (let i = 1; i < TOP.length; i++) {
    if (x <= TOP[i][0]) {
      const [x0, y0] = TOP[i - 1];
      const [x1, y1] = TOP[i];
      return y0 + ((x - x0) / (x1 - x0)) * (y1 - y0);
    }
  }
  return 727;
}

const pt = (x, s) => `${x.toFixed(1)} ${(topY(x) + THICK * s).toFixed(1)}`;

function meshPath() {
  let d = "";
  const step = 8.2;
  for (let x = 409; x < 1206; x += step) {
    const n = x + step;
    const m = x + step / 2;
    d += `M${pt(x, 0.08)}L${pt(x, 0.6)}`;
    d += `M${pt(x, 0.6)}Q${pt(m, 0.2)} ${pt(n, 0.12)}`;
    d += `M${pt(x, 0.6)}L${pt(n, 0.84)}M${pt(x, 0.84)}L${pt(n, 0.6)}`;
    d += `M${pt(x, 0.84)}L${pt(m, 1)}`;
  }
  for (const s of [0.1, 0.6, 0.86]) {
    d += `M${pt(405, s)}`;
    for (let x = 413; x < 1212; x += 20) d += `L${pt(x, s)}`;
  }
  return d;
}

const STOPS = [[690, "#00f"], [712, "#0038ff"], [765, "#0080ff"], [800, "#00b8ff"], [840, "#0ff"], [890, "#00ff90"], [965, "#0f0"], [1020, "#80ff00"], [1088, "#ff0"], [1139, "#ff9000"], [1195, "#ff1000"]];

function Model() {
  const outline =
    `M397 229L413 212` + TOP.slice(2).map(([x, y]) => `L${x} ${y}`).join("") + `Q1228 738 1218 747L1212 747` +
    TOP.slice(1, -1).reverse().map(([x, y]) => `L${x} ${y + THICK}`).join("") + "z";
  return (
    <svg className="absolute inset-0 size-full" aria-label="位移云图">
      <defs>
        <linearGradient id="disp" gradientUnits="userSpaceOnUse" x1="397" y1="0" x2="1225" y2="0">
          {STOPS.map(([x, c]) => (
            <stop key={x} offset={(x - 397) / 828} stopColor={c} />
          ))}
        </linearGradient>
        <linearGradient id="shaft" x1="0" x2="1" y1="0" y2="0">
          <stop offset="0" stopColor="#a9a900" /><stop offset=".35" stopColor="#8c8c00" /><stop offset=".6" stopColor="#666600" /><stop offset="1" stopColor="#b4b400" />
        </linearGradient>
      </defs>
      <g transform="translate(-180 -167)" fill="none" shapeRendering="crispEdges">
        <path d={outline} fill="url(#disp)" stroke="#000" strokeWidth="2" />
        <path d={meshPath()} stroke="#000" strokeWidth="1" />
        <path d="M1204 728l22 0M1208 742l16-14M1206 735l18 8M1216 725l-6 20" stroke="#000" />
        <g stroke="#404040">
          <path d="M413 212L1223 679M740 423L1211 696M740 427L1211 700" />
          <ellipse cx="1219" cy="690" rx="7" ry="12" transform="rotate(25 1219 690)" />
          <ellipse cx="1219" cy="690" rx="5" ry="9" transform="rotate(25 1219 690)" />
        </g>
        <path d="M387 206q0-4 5-6l15-8q6-3 6 2v18l-20 17q-6 4-6 0z" fill="#fff" stroke="#111" />
        <path d="M388 213h3v6h-3M395 214q5-9 16-12M398 217q5-8 13-10M395 214l3 3" stroke="#555" />
        <path d="M795 421c0-8 28-8 28 0l-14 32z" fill="#8f8f00" />
        <path d="M795 421c0 9 28 9 28 0s-28-8-28 0z" fill="#b4b400" />
        <path d="M809 428l9-1-9 26z" fill="#5f5f00" />
        <path d="M803 358h12v66c-3 2-9 2-12 0z" fill="url(#shaft)" />
        <ellipse cx="809" cy="359" rx="6" ry="3.500" fill="#b9b900" />
      </g>
      <g transform="translate(-180 -167)" fontFamily="Liberation Serif, serif" fontSize="15">
        <path d="M232.500 920V904" stroke="#00b400" strokeWidth="1.500" />
        <path d="M232.500 895l6 10q-6 3-12 0z" fill="#008c00" />
        <path d="M232.500 920l-12 6" stroke="#0000b4" strokeWidth="1.500" />
        <path d="M215 922l7 2 1 8-12-.5z" fill="#00008c" />
        <path d="M232.500 920l12 6" stroke="#b40000" strokeWidth="1.500" />
        <path d="M250 922l-7 2-1 8 12-.5z" fill="#a00000" />
        <text x="227" y="895" fill="#3ee65a">Y</text>
        <text x="203" y="939" fill="#3c3cf0">Z</text>
        <text x="253" y="939" fill="#f03c3c">X</text>
      </g>
    </svg>
  );
}

function ViewCube() {
  return (
    <svg width="84" height="100" viewBox="0 0 84 100" className="absolute top-[45px] right-[19px]" aria-label="ViewCube">
      <defs><radialGradient id="cubeshade"><stop offset="0" stopColor="#5c6678" stopOpacity=".7" /><stop offset="1" stopColor="#5c6678" stopOpacity="0" /></radialGradient></defs>
      <ellipse cx="42" cy="68" rx="42" ry="29" fill="url(#cubeshade)" />
      <g stroke="#84888f" strokeWidth="1" strokeLinejoin="round">
        <path d="M42 4l36 17-36 19L7 21z" fill="#ccd1da" />
        <path d="M7 21l35 19v42L11 59z" fill="#c3c9d4" />
        <path d="M78 21L42 40v42l32-23z" fill="#bcc2cf" />
      </g>
      <g fontFamily="Noto Sans CJK SC, sans-serif" fontWeight="300" fontSize="19" fill="#82868f" textAnchor="middle">
        <text transform="matrix(.85 .4 -.85 .42 37 27)">上</text>
        <text transform="matrix(.85 .5 .05 .95 24 54)">前</text>
        <text transform="matrix(.85 -.5 -.05 .95 60 55)">右</text>
      </g>
    </svg>
  );
}

const NavCaret = () => (
  <button type="button" aria-label="更多" className="flex h-3 w-full items-center justify-center"><Caret color="#858c98" w={6} h={3} /></button>
);

const NavItem = ({ label, h, children }) => (
  <button type="button" aria-label={label} className={`flex w-full items-center justify-center ${h}`}>{children}</button>
);

function NavBar() {
  const g = "#858c98";
  return (
    <div className="absolute top-36 right-0 flex w-[34px] flex-col items-center rounded-l-md border-2 border-r-0 border-[#929bab] bg-[#cbd2df]">
      <button type="button" aria-label="关闭导航栏" className="mr-1 flex h-3 items-center self-end">
        <Svg w={8} stroke="#fff"><circle cx="4" cy="4" r="4" fill="#858c98" stroke="none" /><path d="M2.500 2.500l3 3M5.500 2.500l-3 3" strokeWidth="1" /></Svg>
      </button>
      <NavItem label="全导航控制盘" h="h-9"><Svg w={23} stroke={g}><path d="M11 1.500h10.500V11A10 10 0 1 1 11 1.500z" fill="#dfe3eb" /><circle cx="11.500" cy="11.500" r="6" fill="#ccd3de" /><path d="M3.500 18.500l3.500-3M19.500 18.500l-3.500-3" /></Svg></NavItem>
      <NavCaret />
      <span className="h-px w-[26px] bg-[#9aa2b0]" />
      <NavItem label="平移" h="h-9"><Svg w={24} stroke={g}><path d="M8 22C6 18 3 15 1 12c1-2 3-1 5 2L3.500 5c1-2 3-1 3.500 1l2 6L8.500 3c1-2.500 3-2 3.500 0l.5 9 1.500-9c1-2 3-1 3 1l-1 9 3.500-6c2-1 3 0 2 2-2 5-3 8-5 13z" fill="#e6e9ef" /></Svg></NavItem>
      <NavItem label="缩放" h="h-7"><Svg w={23} stroke={g}><path d="M1.500 1.500h10l3.500 4V19H1.500z" fill="#dfe3eb" /><path d="M11 2v4h4" /><path d="M18 18l4 4" strokeWidth="3" /><circle cx="15" cy="15.500" r="4.500" fill="#eef1f5" /></Svg></NavItem>
      <NavCaret />
      <NavItem label="动态观察" h="h-[30px]"><Svg w={23} stroke={g} strokeWidth="1.800"><ellipse cx="11.500" cy="11.500" rx="4" ry="10" /><path d="M8 8C-2 9-1 14 8 14.500M14 15C24 14 24 10 16 8M10 11.500h4M12 9.500v4M14 6h4M16 4v4" /></Svg></NavItem>
      <NavCaret />
      <NavItem label="观察方向" h="h-[30px]"><Svg w={24} stroke={g}><path d="M1 8h22v14H1z" fill="#dfe3eb" strokeWidth="1.800" /><path d="M5 12h14v6H5z" fill="#b9c1cd" /><path d="M2 7l6-5v3l8-2v4" strokeWidth="1.200" /></Svg></NavItem>
      <NavItem label="视图" h="h-6"><Svg w={17} stroke={g}><path d="M1 5l4-4h11v10l-4 4H1z" fill="#dfe3eb" /><path d="M1 5h11v10M12 5l4-4M1 10h5v5" /></Svg></NavItem>
      <NavCaret />
      <NavItem label="视觉样式" h="h-[22px]"><Svg w={17} stroke="#6d7f9f" strokeWidth="1.200"><path d="M5 8l4-4h7v8l-4 4H5zM5 8h7v8M12 8l4-4M5 16l4-4V4M9 12h7" /><circle cx="5.500" cy="5.500" r="4.500" stroke="#5b86cf" /></Svg></NavItem>
      <NavCaret />
      <NavItem label="光源" h="h-[22px]"><Svg w={17} stroke="#8a8f88" strokeWidth="1.200"><path d="M8.500 0v17M0 8.500h17M2.500 2.500l12 12M14.500 2.500l-12 12" /><circle cx="8.500" cy="8.500" r="4" fill="#f4f0cf" /><circle cx="10" cy="15" r="1.800" fill="#4f95c9" stroke="none" /><circle cx="15" cy="14" r="1.800" fill="#d98a8f" stroke="none" /></Svg></NavItem>
      <NavCaret />
      <NavItem label="阴影" h="h-[22px]"><Svg w={17} stroke={g} strokeWidth="1.200"><path d="M0 12l5-2h10l2 5-8 2z" fill="#dfe3eb" /><circle cx="8.500" cy="6" r="5" fill="#d3dfec" stroke="#64809c" /><path d="M11 12h5v5h-5z" fill="#cf5a63" stroke="none" /></Svg></NavItem>
      <NavCaret />
      <button type="button" aria-label="自定义导航栏" className="mr-1 flex h-4 items-center self-end">
        <Svg w={8} stroke="#fff"><circle cx="4" cy="4" r="4" fill="#858c98" stroke="none" /><path d="M2 3h4M3 5h2" strokeWidth="1" /></Svg>
      </button>
    </div>
  );
}

const INFO = ["节点:13401", "元素:6781", "类型: 位移", "单位: mm", "2022/10/31, 7:58:11"];
const LEGEND = ["0.3413 最大值", "0.2731", "0.2048", "0.1365", "0.0683", "0 最小值"];

function Viewport() {
  return (
    <main className="relative min-h-0 flex-1 overflow-hidden bg-linear-to-b from-[#acb8cd] to-[#dbe7f5] text-black">
      <Model />
      <div className="relative ml-[19px] w-[220px] text-[18px] font-light">
        <div className="pt-0.5">
          {INFO.map((t) => (
            <p key={t} className="h-5 leading-5 whitespace-nowrap"><Mixed latin="text-[15px]" text={t} /></p>
          ))}
        </div>
        <div className="mt-[17px] flex">
          <div className="flex h-[391px] w-[21px] flex-col divide-y divide-black border border-black bg-[linear-gradient(to_bottom,#f00,#ff0_25%,#0f0_49%,#0ff_75%,#00f_98%)]">
            {[0, 1, 2, 3, 4].map((i) => (
              <span key={i} className="flex-1" />
            ))}
          </div>
          <ul className="-mt-4 ml-[11px] flex flex-col justify-between whitespace-nowrap">
            {LEGEND.map((t) => (
              <li key={t} className="h-[18px] leading-[18px]"><Mixed latin="text-[15px]" text={t} /></li>
            ))}
          </ul>
        </div>
      </div>
      <div role="tooltip" className="absolute top-[574px] left-[1032px] h-[21px] w-[176px] border border-black bg-[#a2a3a6] pl-[5px] text-[13px] leading-4 text-[#222]">
        <Mixed latin="text-[11px]" text="最大值: 0.3413 mm" />
      </div>
      <div className="absolute top-[3px] right-px flex h-4 items-center gap-[9px]">
        <button type="button" aria-label="最小化视图"><Svg w={10} h={12} stroke="#444"><path d="M1 10.500h8" strokeWidth="2.500" /></Svg></button>
        <button type="button" aria-label="平铺视图"><Svg w={13} h={12} stroke="#444"><path d="M1 1.500h11v9.500H1zM7 1v10M7 6h5" /></Svg></button>
        <button type="button" aria-label="关闭视图"><Svg w={11} stroke="#444"><path d="M1 1l9 9M10 1l-9 9" strokeWidth="2.200" /></Svg></button>
      </div>
      <ViewCube />
      <NavBar />
    </main>
  );
}

function DocTabs() {
  return (
    <div className="flex h-[30px] shrink-0 items-center bg-[#d8d8d8]">
      <button type="button" aria-label="主页" className="ml-[5px]"><HomeIcon /></button>
      <div className="ml-[7px] flex h-full w-[174px] items-center justify-between border-b-4 border-[#38abe0] bg-[#eee] pr-2 pl-[10px] text-[15px] text-[#0e8fd0]">
        <a href="#doc" className="whitespace-nowrap">10x500x1.5 圆管.ipt</a>
        <button type="button" aria-label="关闭文档"><Svg w={11} stroke="#888"><path d="M1 1l9 9M10 1l-9 9" strokeWidth="2" /></Svg></button>
      </div>
      <button type="button" aria-label="文档列表" className="mr-[5px] ml-auto"><Svg w={18} h={16}><path d="M0 2h18M0 8h18M0 14h18" strokeWidth="2.200" /></Svg></button>
    </div>
  );
}

/* ---------- task bar ---------- */

function TaskBar() {
  return (
    <footer className="flex h-[50px] shrink-0 items-center bg-[#eee] text-[15px] text-black">
      <button type="button" aria-label="开始" className="ml-[22px]"><Svg w={16} stroke="none"><path d="M0 2.500l6.500-1v6H0zM7.500 1.300L16 0v7.500H7.500zM0 8.500h6.500v6l-6.500-1zM7.500 8.500H16V16l-8.500-1.300z" fill="#000" /></Svg></button>
      <button type="button" aria-label="搜索" className="ml-[42px]"><Svg w={20} stroke="#000"><circle cx="13" cy="7" r="6" /><path d="M8.500 11.500L1 19.500" /></Svg></button>
      <button type="button" aria-label="Cortana" className="ml-10"><Svg w={20} stroke="#000"><circle cx="10" cy="10" r="8.300" strokeWidth="3" /></Svg></button>
      <button type="button" className="ml-[29px] flex h-full w-[190px] items-center border-b-2 border-[#f9474b] pl-[7px] whitespace-nowrap">
        <Svg w={30} stroke="none">
          <circle cx="15" cy="15" r="15" fill="#1c86d8" />
          <path d="M1 10C5-2 24-4 29 10c3 8-3 12-8 11-4-1-3-4-2-6 0-5-4-7-8-6C6 9 2 12 0 16z" fill="#35c5b4" />
          <path d="M22 3c6 3 9 9 7 14-2 4-6 5-9 4z" fill="#62d84e" opacity=".7" />
          <path d="M10 12c-5 9 3 19 17 13-6 7-22 8-26-5C0 14 6 11 10 12z" fill="#1560b0" />
          <path d="M19 13c-1 3-2 6 2 8 3 1 6 0 8-2-1 4-4 5-8 5-7 0-10-9-4-12z" fill="#eee" />
        </Svg>
        <span className="ml-1">请教钢棒、钢管悬...</span>
      </button>
      <button type="button" aria-label="微信" className="ml-5"><WeChat size={30} /></button>
      <button type="button" className="ml-4 flex h-full w-[200px] items-center border-b-2 border-[#f9474b] bg-[#f8f8f8] pl-[13px] whitespace-nowrap">
        <Svg w={28} stroke="none">
          <path d="M0 0h28v28H0z" fill="#f7dcc0" />
          <path d="M9 2h10v4l-2.500 1.500v9L19 18v4H9v-4l2.500-1.500v-9L9 6z" fill="#c96a1d" />
          <text x="14" y="27" fontSize="6" fontFamily="Liberation Sans, sans-serif" fontWeight="bold" fill="#d9772b">PRO</text>
        </Svg>
        <span className="ml-[5px]">Autodesk Invento...</span>
      </button>
      <div className="ml-auto flex h-full items-center">
        <button type="button" aria-label="显示隐藏的图标"><Svg w={12} h={7} stroke="#000"><path d="M.5 6.500L6 1l5.500 5.500" /></Svg></button>
        <button type="button" aria-label="微信" className="ml-3.5"><WeChat size={20} /></button>
        <button type="button" aria-label="安全" className="ml-2.5"><Svg w={20} stroke="none"><rect width="20" height="20" rx="3" fill="#2b7cc4" /><path d="M10 2l7 2c0 7-2 11-7 13-5-2-7-6-7-13z" fill="#8cc5ea" stroke="#e0f0fa" strokeWidth="1" /><path d="M10 13l3 4 6-9" stroke="#d9e021" strokeWidth="3" /></Svg></button>
        <button type="button" aria-label="钉钉" className="ml-2.5"><Svg w={18} stroke="none"><rect width="18" height="18" rx="4" fill="#1485fc" /><path d="M5 3c4 2 8 5 8 8 0 2-1 3-3 4 .5-1.500 0-2 0-2-3-1-4-5-5-10z" fill="#fff" /></Svg></button>
        <button type="button" aria-label="电池" className="ml-[11px]"><Svg w={20} h={14} stroke="#000"><path d="M5 3.500h13.500v9H4.500v-4M19.500 6v4M1 1.500v3h4v-3M3 5v3" /><path d="M6 5.500h11v5.500H6z" fill="#000" stroke="none" /></Svg></button>
        <button type="button" aria-label="音量" className="ml-2.5"><Svg w={20} h={16} stroke="#000" strokeWidth="1.200"><path d="M1 5h3l4-4v14l-4-4H1z" /><path d="M10.500 6q1.500 2 0 4" /><path d="M13 4q3 4 0 8M15.500 2q5 6 0 12" stroke="#aaa" /></Svg></button>
        <button type="button" className="ml-[8px] w-5 text-[19px]">中</button>
        <time className="ml-[7px] flex w-[84px] flex-col text-center leading-[23px]">
          <span>7:58</span>
          <span>2022/10/31</span>
        </time>
        <button type="button" aria-label="通知" className="relative ml-[21px] h-6 w-[30px]">
          <Svg w={20} stroke="none"><path d="M0 1h20v15h-6l-5 4v-4H0z" fill="#000" /><path d="M4 5.500h12M4 9h12M4 12.500h7" stroke="#fff" strokeWidth="1.200" /></Svg>
          <span className="absolute top-[10px] left-[9px] flex size-5 items-center justify-center rounded-full border border-[#888] bg-[#d4d4d4] text-[14px] leading-none">1</span>
        </button>
        <span className="mr-[5px] ml-[15px] h-full w-px bg-[#bbb]" />
      </div>
    </footer>
  );
}

export default function App() {
  return (
    <div className={`flex h-screen w-full flex-col overflow-hidden bg-[#d8d8d8] ${UI}`}>
      <TitleBar />
      <Tabs />
      <Ribbon />
      <div className="flex min-h-0 flex-1">
        <Browser />
        <div className="flex min-w-0 flex-1 flex-col">
          <Viewport />
          <DocTabs />
        </div>
      </div>
      <div className="flex h-7 shrink-0 items-center bg-[#eee] text-[15px] text-[#333]">
        <span>就绪</span>
        <span className="ml-auto flex h-[26px] w-10 items-center border-l border-[#ccc] pl-2.5">1</span>
        <span className="flex h-[26px] w-[38px] items-center border-l border-[#ccc] pl-2">1</span>
      </div>
      <TaskBar />
    </div>
  );
}
